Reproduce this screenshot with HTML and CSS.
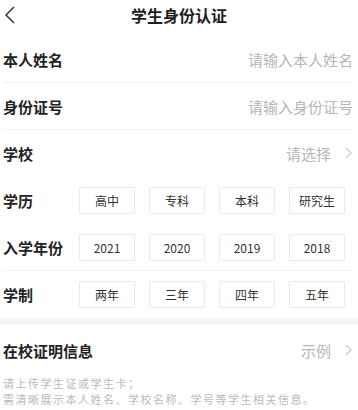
FILE: index.html
```html
<!DOCTYPE html>
<html lang="zh-CN">
<head>
<meta charset="utf-8">
<title>学生身份认证</title>
<link rel="stylesheet" href="styles.css">
</head>
<body>
<div class="topbar">
  <svg class="back" width="12" height="18" viewBox="0 0 12 18"><polyline points="10,1 2,9 10,17" fill="none" stroke="#333" stroke-width="1.5"/></svg>
  <h1>学生身份认证</h1>
</div>

<div class="form">
  <div class="row line">
    <span class="tag">本人姓名</span>
    <span class="hint">请输入本人姓名</span>
  </div>
  <div class="row line">
    <span class="tag">身份证号</span>
    <span class="hint">请输入身份证号</span>
  </div>
  <div class="row">
    <span class="tag">学校</span>
    <span class="hint">请选择<svg class="arrow" width="7" height="12" viewBox="0 0 7 12"><polyline points="1,1 6,6 1,11" fill="none" stroke="#cbcbd0" stroke-width="1.2"/></svg></span>
  </div>
  <div class="row">
    <span class="tag">学历</span>
    <div class="opts"><span class="opt">高中</span><span class="opt">专科</span><span class="opt">本科</span><span class="opt">研究生</span></div>
  </div>
  <div class="row line">
    <span class="tag">入学年份</span>
    <div class="opts"><span class="opt">2021</span><span class="opt">2020</span><span class="opt">2019</span><span class="opt">2018</span></div>
  </div>
  <div class="row">
    <span class="tag">学制</span>
    <div class="opts"><span class="opt">两年</span><span class="opt">三年</span><span class="opt">四年</span><span class="opt">五年</span></div>
  </div>
</div>

<div class="gap"></div>

<div class="proof">
  <div class="proofhead">
    <span class="big">在校证明信息</span>
    <span class="hint">示例<svg class="arrow" width="7" height="12" viewBox="0 0 7 12"><polyline points="1,1 6,6 1,11" fill="none" stroke="#cbcbd0" stroke-width="1.2"/></svg></span>
  </div>
  <p class="note">请上传学生证或学生卡；<br>需清晰展示本人姓名、学校名称、学号等学生相关信息。</p>
</div>
</body>
</html>
```

FILE: styles.css
```css
body {
margin: 0;
background: #fff;
font-family: "Noto Sans CJK SC", "Noto Sans", sans-serif;
color: #222;
}
.topbar {
position: relative;
height: 30px;
display: flex;
align-items: center;
justify-content: center;
}
.topbar h1 {
margin: 0;
font-size: 16px;
font-weight: 600;
color: #1e1e1e;
}
.back {
position: absolute;
left: 4px;
top: 6px;
}
.form {
margin-top: 6px;
padding: 0 5px 0 3px;
}
.row {
height: 46px;
display: flex;
align-items: center;
justify-content: space-between;
border-bottom: 1px solid transparent;
}
.line {
border-bottom-color: #f2f2f4;
}
.tag {
font-size: 15px;
font-weight: 600;
width: 76px;
flex: none;
}
.hint {
font-size: 15px;
color: #b5b5bb;
display: flex;
align-items: center;
}
.arrow {
margin-left: 14px;
margin-right: 1px;
}
.opts {
display: flex;
gap: 14px;
margin-right: 8px;
}
.opt {
width: 54px;
height: 25px;
border: 1px solid #e9e9ec;
border-radius: 2px;
font-size: 12px;
color: #333;
display: flex;
align-items: center;
justify-content: center;
}
.gap {
height: 7px;
background: #f5f5f7;
}
.proof {
padding: 0 5px 0 3px;
}
.proofhead {
height: 50px;
display: flex;
align-items: center;
justify-content: space-between;
}
.big {
font-size: 15px;
font-weight: 600;
}
.note {
margin: 0;
font-size: 11px;
letter-spacing: 1.5px;
line-height: 16px;
color: #b9b9be;
}
```
